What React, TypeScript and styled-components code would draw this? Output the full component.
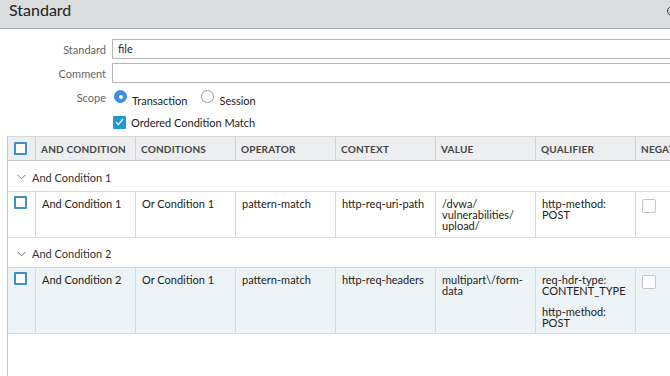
import React from "react";
import styled, { createGlobalStyle } from "styled-components";

const Global = createGlobalStyle`
  html, body { margin: 0; padding: 0; background: #fff; overflow: hidden; }
  body { font-family: Lato, "Open Sans", Arial, sans-serif; color: #333; }
  * { box-sizing: border-box; }
`;

const Page = styled.div`
  width: 700px;
  height: 376px;
  display: flex;
  flex-direction: column;
`;

const TitleBar = styled.div`
  height: 29px;
  flex: none;
  background: #dcdddf;
  border-bottom: 1px solid #aeb0b3;
  display: flex;
  align-items: flex-start;
  justify-content: space-between;
  padding: 0 23px 0 9px;
`;

const Title = styled.div`
  font-size: 16px;
  line-height: 19px;
  color: #222;
`;

const HelpIcon = styled.div`
  width: 10px;
  height: 10px;
  margin-top: 6px;
  border: 1.5px solid #333;
  border-radius: 50%;
`;

const Form = styled.div`
  display: grid;
  grid-template-columns: 106px 1fr;
  column-gap: 6px;
  grid-template-rows: 20px 20px 22px 18px;
  row-gap: 4px;
  padding: 10px 0 0 0;
  align-items: center;
`;

const Label = styled.div<{ $raise?: boolean }>`
  font-size: 11px;
  color: #666;
  text-align: right;
  align-self: ${(p) => (p.$raise ? "start" : "center")};
  margin-top: ${(p) => (p.$raise ? "4px" : "0")};
`;

const TextInput = styled.div`
  height: 20px;
  border: 1px solid #b6b6b6;
  border-right: none;
  font-size: 11px;
  line-height: 18px;
  padding-left: 5px;
  color: #222;
`;

const RadioGroup = styled.div`
  display: flex;
  align-items: center;
  padding: 2px 0 0 2px;
`;

const RadioOption = styled.label`
  display: flex;
  align-items: flex-start;
  font-size: 11px;
  color: #222;
  margin-right: 14px;
`;

const RadioCircle = styled.span<{ $on?: boolean }>`
  width: 13px;
  height: 13px;
  border-radius: 50%;
  margin-right: 5px;
  margin-top: -1px;
  background: ${(p) => (p.$on ? "#3d8ee6" : "#fff")};
  border: 1px solid ${(p) => (p.$on ? "#3d8ee6" : "#9a9a9a")};
  display: flex;
  align-items: center;
  justify-content: center;
  &::after {
    content: "";
    width: 4px;
    height: 4px;
    border-radius: 50%;
    background: ${(p) => (p.$on ? "#fff" : "transparent")};
  }
`;

const RadioText = styled.span`
  margin-top: 3px;
`;

const CheckRow = styled.label`
  grid-column: 2;
  display: flex;
  align-items: center;
  font-size: 11px;
  color: #222;
  padding-left: 1px;
`;

const CheckedBox = styled.span`
  width: 13px;
  height: 13px;
  background: #1d9ad6;
  border-radius: 1px;
  margin-right: 5px;
  display: flex;
  align-items: center;
  justify-content: center;
`;

const Table = styled.div`
  margin: 5px 0 0 7px;
  border-left: 1px solid #c3c5c7;
  flex: 1;
  display: grid;
  grid-template-columns: 28px repeat(7, 100px);
  grid-auto-rows: min-content;
  align-content: start;
`;

const HeadCell = styled.div`
  height: 25px;
  background: #eceeef;
  border-top: 1px solid #d6d8da;
  border-bottom: 1px solid #c3c5c7;
  border-right: 1px solid #cfd1d3;
  font-size: 10px;
  font-weight: 700;
  letter-spacing: 0.2px;
  color: #444;
  padding-left: 5px;
  display: flex;
  align-items: center;
  white-space: nowrap;
  overflow: hidden;
`;

const HeadBox = styled(HeadCell)`
  padding-left: 6px;
`;

const BoxCell = styled.div<{ $bg?: string }>`
  padding: 4px 0 0 6px;
  background: ${(p) => p.$bg || "transparent"};
  border-right: 1px solid #d6d8da;
  border-bottom: 1px solid #dcdee0;
`;

const GroupRow = styled.div<{ $h: number }>`
  grid-column: 1 / -1;
  height: ${(p) => p.$h}px;
  border-bottom: 1px solid #d8dadc;
  display: flex;
  align-items: center;
  padding: 2px 0 0 9px;
  font-size: 11px;
  color: #333;
  gap: 6px;
`;

const Cell = styled.div<{ $bg?: string; $h: number }>`
  height: ${(p) => p.$h}px;
  background: ${(p) => p.$bg || "transparent"};
  border-right: 1px solid #d6d8da;
  border-bottom: 1px solid #dcdee0;
  padding: 6px 5px 0 6px;
  font-size: 11px;
  line-height: 11px;
  color: #222;
  overflow: hidden;
`;

const Block = styled.div`
  & + & {
    margin-top: 10px;
  }
`;

const RowBox = styled.span`
  display: block;
  width: 13px;
  height: 13px;
  border: 2px solid #3e90c8;
  border-radius: 1px;
  background: #fff;
`;

const NegBox = styled.span`
  display: block;
  width: 14px;
  height: 14px;
  border: 1px solid #c4c6c8;
  border-radius: 2px;
  background: #fff;
  margin-top: 1px;
`;

const Chevron = () => (
  <svg width="9" height="6" viewBox="0 0 9 6" fill="none">
    <path d="M0.5 0.8 L4.5 4.8 L8.5 0.8" stroke="#777" strokeWidth="1" />
  </svg>
);

type Row = {
  and: string;
  or: string;
  op: string;
  ctx: string;
  value: string[];
  qual: string[][];
};

const groups: { title: string; gh: number; rh: number; bg?: string; row: Row }[] = [
  {
    title: "And Condition 1",
    gh: 31,
    rh: 46,
    row: {
      and: "And Condition 1",
      or: "Or Condition 1",
      op: "pattern-match",
      ctx: "http-req-uri-path",
      value: ["/dvwa/", "vulnerabilities/", "upload/"],
      qual: [["http-method:", "POST"]],
    },
  },
  {
    title: "And Condition 2",
    gh: 30,
    rh: 66,
    bg: "#edf4f7",
    row: {
      and: "And Condition 2",
      or: "Or Condition 1",
      op: "pattern-match",
      ctx: "http-req-headers",
      value: ["multipart\\/form-", "data"],
      qual: [
        ["req-hdr-type:", "CONTENT_TYPE"],
        ["http-method:", "POST"],
      ],
    },
  },
];

const headers = ["AND CONDITION", "CONDITIONS", "OPERATOR", "CONTEXT", "VALUE", "QUALIFIER", "NEGATE"];

const Lines = ({ lines }: { lines: string[] }) => (
  <>
    {lines.map((l, i) => (
      <div key={i}>{l}</div>
    ))}
  </>
);

export default function App() {
  return (
    <Page>
      <Global />
      <TitleBar>
        <Title>Standard</Title>
        <HelpIcon />
      </TitleBar>
      <Form>
        <Label>Standard</Label>
        <TextInput>file</TextInput>
        <Label>Comment</Label>
        <TextInput />
        <Label $raise>Scope</Label>
        <RadioGroup>
          <RadioOption>
            <RadioCircle $on />
            <RadioText>Transaction</RadioText>
          </RadioOption>
          <RadioOption>
            <RadioCircle />
            <RadioText>Session</RadioText>
          </RadioOption>
        </RadioGroup>
        <CheckRow>
          <CheckedBox>
            <svg width="9" height="8" viewBox="0 0 9 8" fill="none">
              <path d="M1 4.2 L3.4 6.6 L8 1" stroke="#fff" strokeWidth="1.2" />
            </svg>
          </CheckedBox>
          Ordered Condition Match
        </CheckRow>
      </Form>
      <Table>
        <HeadBox>
          <RowBox />
        </HeadBox>
        {headers.map((h) => (
          <HeadCell key={h}>{h}</HeadCell>
        ))}
        {groups.map((g) => (
          <React.Fragment key={g.title}>
            <GroupRow $h={g.gh}>
              <Chevron />
              {g.title}
            </GroupRow>
            <BoxCell $bg={g.bg}>
              <RowBox />
            </BoxCell>
            <Cell $h={g.rh} $bg={g.bg}>{g.row.and}</Cell>
            <Cell $h={g.rh} $bg={g.bg}>{g.row.or}</Cell>
            <Cell $h={g.rh} $bg={g.bg}>{g.row.op}</Cell>
            <Cell $h={g.rh} $bg={g.bg}>{g.row.ctx}</Cell>
            <Cell $h={g.rh} $bg={g.bg}>
              <Lines lines={g.row.value} />
            </Cell>
            <Cell $h={g.rh} $bg={g.bg}>
              {g.row.qual.map((q, i) => (
                <Block key={i}>
                  <Lines lines={q} />
                </Block>
              ))}
            </Cell>
            <Cell $h={g.rh} $bg={g.bg}>
              <NegBox />
            </Cell>
          </React.Fragment>
        ))}
      </Table>
    </Page>
  );
}
